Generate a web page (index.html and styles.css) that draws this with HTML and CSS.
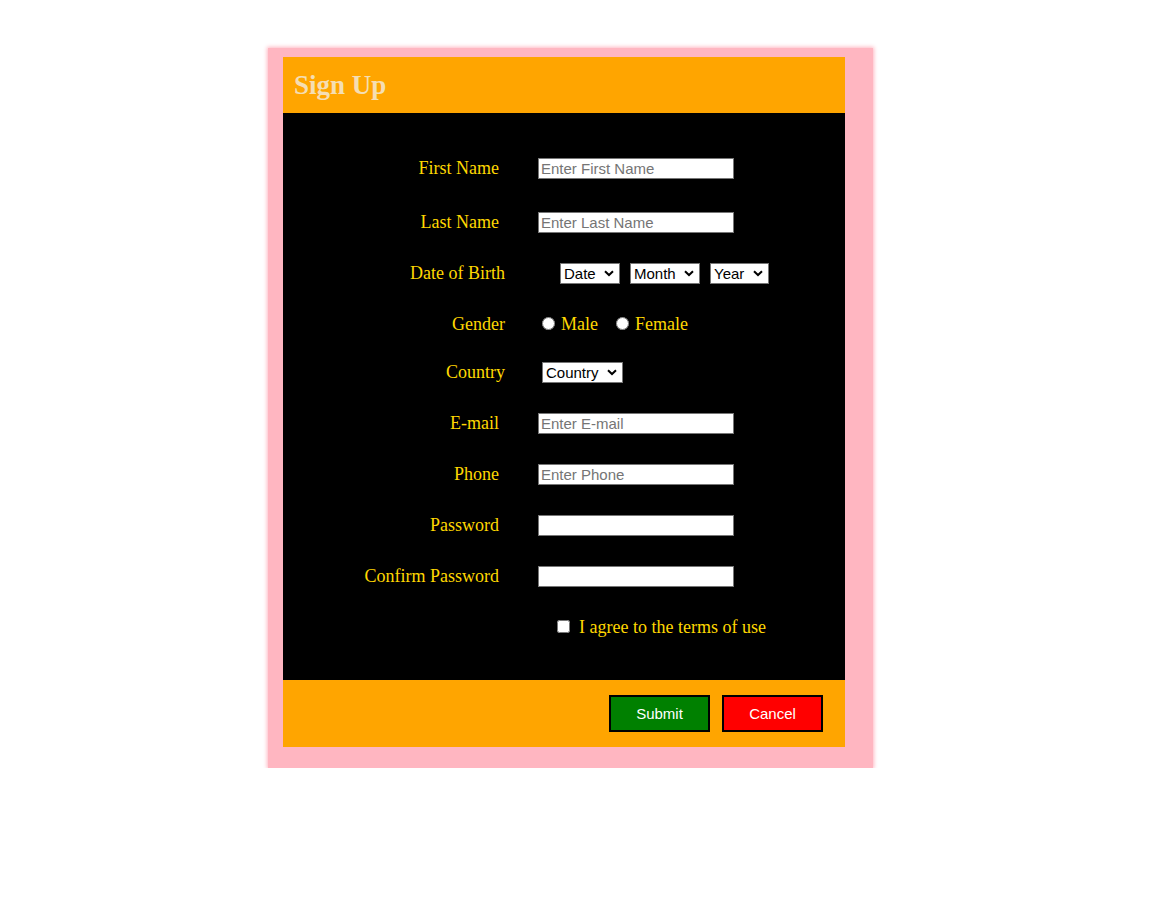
FILE: index.html
```html
<!DOCTYPE html>
<html>
<head>
<meta charset="utf-8">
<title>Sign Up</title>
<link rel="stylesheet" href="styles.css">
</head>
<body>
<div class="frame">
  <div class="card">
    <div class="header"><h1 class="title">Sign Up</h1></div>
    <form class="form">
      <div class="row row-first">
        <label class="label">First Name</label>
        <input class="text" type="text" placeholder="Enter First Name">
      </div>
      <div class="row">
        <label class="label">Last Name</label>
        <input class="text" type="text" placeholder="Enter Last Name">
      </div>
      <div class="row">
        <label class="label label-wide">Date of Birth</label>
        <div class="selects">
          <span class="selwrap"><select class="sel"><option>Date</option></select><svg class="chev" width="10" height="7" viewBox="0 0 10 7"><path d="M1 1.2 L5 5 L9 1.2" fill="none" stroke="#000" stroke-width="2"/></svg></span>
          <span class="selwrap"><select class="sel"><option>Month</option></select><svg class="chev" width="10" height="7" viewBox="0 0 10 7"><path d="M1 1.2 L5 5 L9 1.2" fill="none" stroke="#000" stroke-width="2"/></svg></span>
          <span class="selwrap"><select class="sel"><option>Year</option></select><svg class="chev" width="10" height="7" viewBox="0 0 10 7"><path d="M1 1.2 L5 5 L9 1.2" fill="none" stroke="#000" stroke-width="2"/></svg></span>
        </div>
      </div>
      <div class="row">
        <label class="label label-wide">Gender</label>
        <div class="radios">
          <input class="radio" type="radio" name="g" id="m"><label class="opt" for="m">Male</label>
          <input class="radio radio-f" type="radio" name="g" id="f"><label class="opt" for="f">Female</label>
        </div>
      </div>
      <div class="row row-tight">
        <label class="label label-wide">Country</label>
        <span class="selwrap"><select class="sel"><option>Country</option></select><svg class="chev" width="10" height="7" viewBox="0 0 10 7"><path d="M1 1.2 L5 5 L9 1.2" fill="none" stroke="#000" stroke-width="2"/></svg></span>
      </div>
      <div class="row">
        <label class="label">E-mail</label>
        <input class="text" type="text" placeholder="Enter E-mail">
      </div>
      <div class="row">
        <label class="label">Phone</label>
        <input class="text" type="text" placeholder="Enter Phone">
      </div>
      <div class="row">
        <label class="label">Password</label>
        <input class="text" type="password">
      </div>
      <div class="row">
        <label class="label">Confirm Password</label>
        <input class="text" type="password">
      </div>
      <div class="row">
        <div class="label"></div>
        <div class="agree">
          <input class="check" type="checkbox" id="t"><label class="opt" for="t">I agree to the terms of use</label>
        </div>
      </div>
    </form>
    <div class="footer">
      <button class="btn btn-submit" type="button">Submit</button>
      <button class="btn btn-cancel" type="button">Cancel</button>
    </div>
  </div>
</div>
</body>
</html>
```
FILE: styles.css
```css
html, body {
  margin: 0;
  padding: 0;
  background: #ffffff;
}
body {
  font-family: "Liberation Serif", "Times New Roman", serif;
}
.frame {
  margin: 48px 0 0 268px;
  width: 562px;
  padding: 9px 28px 21px 15px;
  background: #ffb6c1;
  box-shadow: 0 0 4px 1px #ffb6c1;
}
.card {
  width: 562px;
}
.header {
  background: #ffa500;
  height: 56px;
  display: flex;
  align-items: center;
  padding-left: 11px;
}
.title {
  margin: 0;
  font-size: 27px;
  font-weight: bold;
  color: #f5deb3;
  padding-top: 1px;
}
.form {
  background: #000000;
  margin: 0;
  padding: 45px 0 42px 0;
}
.row {
  display: flex;
  align-items: center;
  height: 21px;
  margin-bottom: 30px;
}
.row:last-child {
  margin-bottom: 0;
}
.row-first {
  margin-bottom: 33px;
}
.row-tight {
  margin-top: -3px;
}
.label {
  width: 216px;
  flex: none;
  text-align: right;
  color: #ffd700;
  font-size: 18px;
  margin-right: 39px;
}
.label-wide {
  width: 222px;
  margin-right: 37px;
}
.text {
  width: 196px;
  height: 21px;
  box-sizing: border-box;
  font-family: "Liberation Sans", Arial, sans-serif;
  font-size: 15px;
  padding: 1px 2px;
  border: 1px solid #767676;
  background: #fff;
  margin: 0;
}
.text::placeholder {
  color: #757575;
}
.selects {
  display: flex;
  gap: 10px;
  margin-left: 18px;
}
.selwrap {
  position: relative;
  display: inline-block;
  height: 21px;
}
.sel {
  -webkit-appearance: none;
  appearance: none;
  font-family: "Liberation Sans", Arial, sans-serif;
  font-size: 15px;
  line-height: 17px;
  height: 21px;
  box-sizing: border-box;
  padding: 1px 23px 1px 3px;
  border: 1px solid #767676;
  border-radius: 0;
  background: #fff;
  color: #000;
  margin: 0;
  display: block;
}
.chev {
  position: absolute;
  right: 6px;
  top: 7px;
  pointer-events: none;
}
.radios {
  display: flex;
  align-items: center;
}
.radio {
  width: 13px;
  height: 13px;
  margin: 0 6px 2px 0;
}
.radio-f {
  margin-left: 18px;
}
.opt {
  color: #ffd700;
  font-size: 18px;
}
.agree {
  display: flex;
  align-items: center;
  margin-left: 19px;
}
.check {
  width: 13px;
  height: 13px;
  margin: 0 9px 2px 0;
}
.footer {
  background: #ffa500;
  height: 67px;
  display: flex;
  align-items: center;
  justify-content: flex-end;
  padding-right: 22px;
  gap: 12px;
}
.btn {
  width: 101px;
  height: 37px;
  border: 2px solid #000;
  color: #fff;
  font-family: "Liberation Sans", Arial, sans-serif;
  font-size: 15px;
  padding: 0;
  margin: 0;
}
.btn-submit {
  background: #008000;
}
.btn-cancel {
  background: #ff0000;
}
```
